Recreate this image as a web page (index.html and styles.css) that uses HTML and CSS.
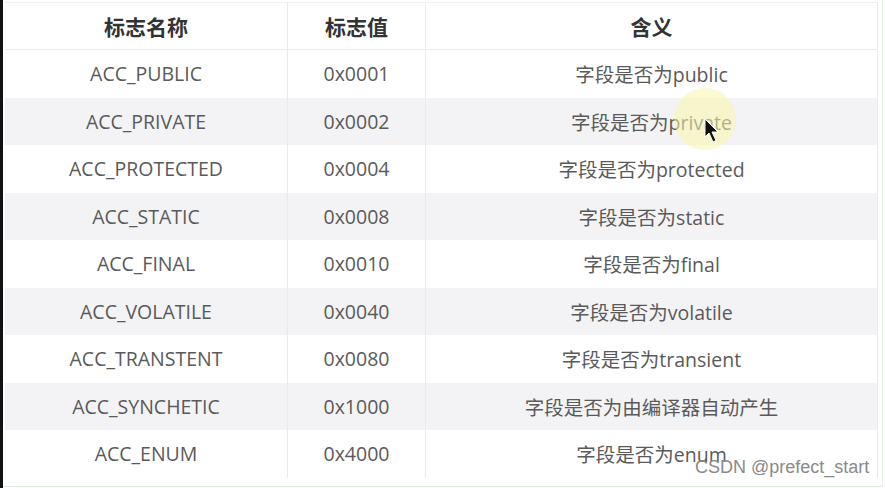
FILE: index.html
```html
<!DOCTYPE html>
<html>
<head>
<meta charset="utf-8">
<link rel="stylesheet" href="styles.css">
</head>
<body>
<div class="page">
  <div class="edge"></div>
  <div class="frame">
    <table class="flags">
      <thead>
        <tr><th class="c1">标志名称</th><th class="c2">标志值</th><th class="c3">含义</th></tr>
      </thead>
      <tbody>
        <tr><td>ACC_PUBLIC</td><td>0x0001</td><td>字段是否为public</td></tr>
        <tr><td>ACC_PRIVATE</td><td>0x0002</td><td>字段是否为private</td></tr>
        <tr><td>ACC_PROTECTED</td><td>0x0004</td><td>字段是否为protected</td></tr>
        <tr><td>ACC_STATIC</td><td>0x0008</td><td>字段是否为static</td></tr>
        <tr><td>ACC_FINAL</td><td>0x0010</td><td>字段是否为final</td></tr>
        <tr><td>ACC_VOLATILE</td><td>0x0040</td><td>字段是否为volatile</td></tr>
        <tr><td>ACC_TRANSTENT</td><td>0x0080</td><td>字段是否为transient</td></tr>
        <tr><td>ACC_SYNCHETIC</td><td>0x1000</td><td>字段是否为由编译器自动产生</td></tr>
        <tr><td>ACC_ENUM</td><td>0x4000</td><td>字段是否为enum</td></tr>
      </tbody>
    </table>
  </div>
</div>
<div class="highlight"></div>
<svg class="cursor" width="16" height="26" viewBox="0 0 16 26"><path d="M1 1 L1 19 L5 15 L9 24 L12 22.5 L8 14 L14 14 Z" fill="#111" stroke="#fff" stroke-width="1"/></svg>
<div class="watermark">CSDN @prefect_start</div>
</body>
</html>
```
FILE: styles.css
```css
html, body {
  margin: 0;
  padding: 0;
  background: #ffffff;
}
body {
  width: 885px;
  height: 488px;
  overflow: hidden;
  position: relative;
  font-family: "Open Sans", "Noto Sans CJK SC", sans-serif;
}
.page {
  display: flex;
  height: 488px;
}
.edge {
  width: 3px;
  background: #111;
  flex: none;
}
.frame {
  flex: 1;
  padding: 2px 4px 3px 2px;
  border-right: 1px solid #e3f0e3;
  margin-right: 3px;
  border-bottom: 1px solid #e0eee0;
  height: 481px;
  box-sizing: content-box;
}
.flags {
  width: 873px;
  border-collapse: collapse;
  table-layout: fixed;
  border-top: 1px solid #f0f2f0;
}
.flags th, .flags td {
  text-align: center;
  padding: 0;
  border-left: 1px solid #ebebeb;
  border-right: 1px solid #ebebeb;
}
.flags th:first-child, .flags td:first-child { border-left: none; }
.flags th {
  height: 46px;
  font-weight: bold;
  font-size: 21px;
  color: #333;
  border-bottom: 1px solid #ebebeb;
}
.flags .c1 { width: 282px; }
.flags .c2 { width: 137px; }
.flags td {
  height: 47.5px;
  font-size: 19.5px;
  color: #5a5a5a;
}
.flags tbody tr:nth-child(even) td {
  background: #f3f3f5;
}
.highlight {
  position: absolute;
  left: 674px;
  top: 88px;
  width: 62px;
  height: 62px;
  border-radius: 50%;
  background: rgba(250, 245, 170, 0.55);
}
.cursor {
  position: absolute;
  left: 704px;
  top: 118px;
}
.watermark {
  position: absolute;
  left: 695px;
  top: 457px;
  font-family: "Liberation Sans", sans-serif;
  font-size: 18px;
  color: #8a8a8a;
}
```
